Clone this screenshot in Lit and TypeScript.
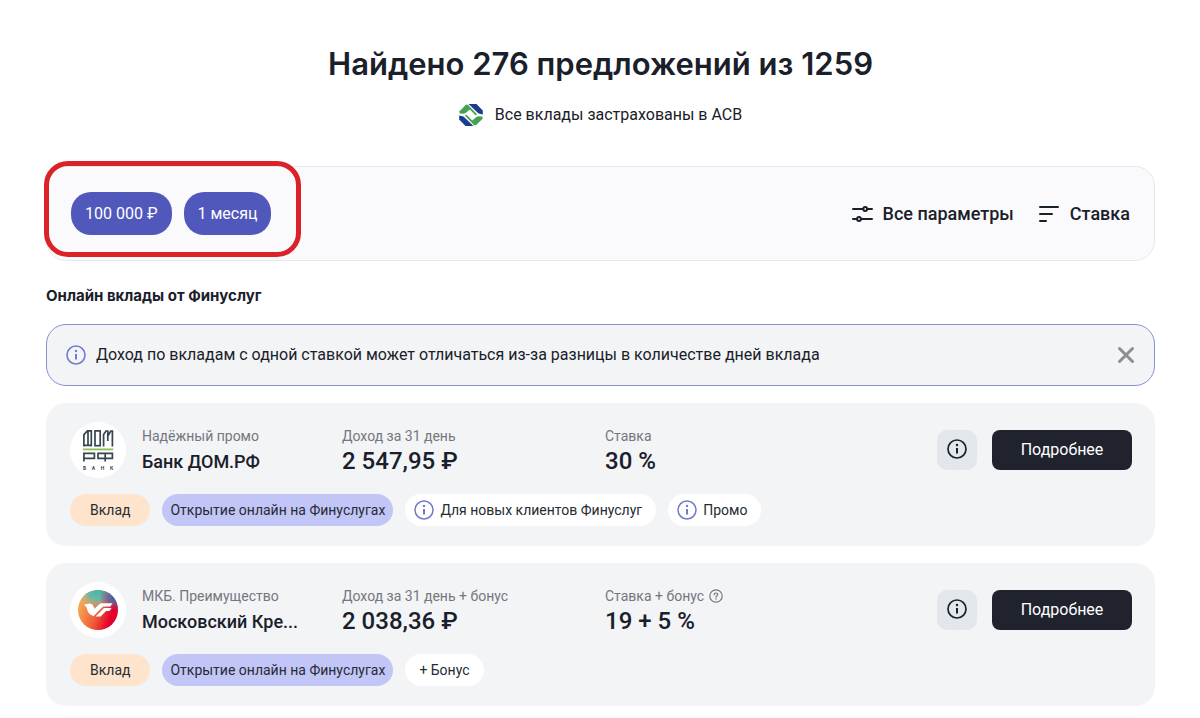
import { LitElement, html, css, nothing, type TemplateResult } from "lit";
import { customElement, property } from "lit/decorators.js";

type Tag = { text: string; kind: "type" | "online" | "plain"; info?: boolean };

type Offer = {
  logo: "domrf" | "mkb";
  product: string;
  bank: string;
  incomeLabel: string;
  income: string;
  rateLabel: string;
  rate: string;
  hint?: boolean;
  tags: Tag[];
};

const offers: Offer[] = [
  {
    logo: "domrf",
    product: "Надёжный промо",
    bank: "Банк ДОМ.РФ",
    incomeLabel: "Доход за 31 день",
    income: "2 547,95 ₽",
    rateLabel: "Ставка",
    rate: "30 %",
    tags: [
      { text: "Вклад", kind: "type" },
      { text: "Открытие онлайн на Финуслугах", kind: "online" },
      { text: "Для новых клиентов Финуслуг", kind: "plain", info: true },
      { text: "Промо", kind: "plain", info: true },
    ],
  },
  {
    logo: "mkb",
    product: "МКБ. Преимущество",
    bank: "Московский Кре...",
    incomeLabel: "Доход за 31 день + бонус",
    income: "2 038,36 ₽",
    rateLabel: "Ставка + бонус",
    rate: "19 + 5 %",
    hint: true,
    tags: [
      { text: "Вклад", kind: "type" },
      { text: "Открытие онлайн на Финуслугах", kind: "online" },
      { text: "+ Бонус", kind: "plain" },
    ],
  },
];

const infoIcon = (size: number, stroke: number) => html`
  <svg width=${size} height=${size} viewBox="0 0 20 20" fill="none" stroke="currentColor" stroke-width=${stroke} aria-hidden="true">
    <circle cx="10" cy="10" r="9"></circle>
    <path d="M10 9v5.4" stroke-width="2"></path>
    <circle cx="10" cy="6" r="1.2" fill="currentColor" stroke="none"></circle>
  </svg>
`;

const hintIcon = html`
  <svg width="14" height="14" viewBox="0 0 14 14" fill="none" stroke="currentColor" stroke-width="1.2" stroke-linecap="round" aria-hidden="true">
    <circle cx="7" cy="7" r="6.2"></circle>
    <path d="M5.2 5.7c0-1 .8-1.7 1.8-1.7s1.8.7 1.8 1.6c0 1.2-1.8 1.3-1.8 2.6"></path>
    <circle cx="7" cy="10" r=".75" fill="currentColor" stroke="none"></circle>
  </svg>
`;

const slidersIcon = html`
  <svg width="22" height="18" viewBox="0 0 22 18" fill="none" stroke="currentColor" stroke-width="2" stroke-linecap="round" aria-hidden="true">
    <path d="M2 4h10.2M16.200 4H21M2 14h4M10 14H21"></path>
    <circle cx="14.200" cy="4" r="1.900"></circle>
    <circle cx="8" cy="14" r="1.900"></circle>
  </svg>
`;

const sortIcon = html`
  <svg width="22" height="18" viewBox="0 0 22 18" fill="none" stroke="currentColor" stroke-width="2" stroke-linecap="round" aria-hidden="true">
    <path d="M2 2h18M2 9h12M2 16h6"></path>
  </svg>
`;

const closeIcon = html`
  <svg width="18" height="18" viewBox="0 0 18 18" fill="none" stroke="currentColor" stroke-width="3" stroke-linecap="round" aria-hidden="true">
    <path d="M2.500 2.500l13 13M15.500 2.500l-13 13"></path>
  </svg>
`;

const insuranceLogo = html`
  <svg width="24" height="24" viewBox="0 0 24 24" aria-hidden="true">
    <path fill="#1a3d90" d="M9.500 1H17.500L23.800 7.500V11.500L19.500 10.500z"></path>
    <path fill="#43a350" d="M.2 8.500L7 1.800H8.800L18 11.200L16.800 12.400L10.800 6.500L6.300 10.300L4.500 10.800L.8 10.500z"></path>
    <g transform="rotate(180 12 12)">
      <path fill="#1a3d90" d="M9.500 1H17.500L23.800 7.500V11.500L19.500 10.500z"></path>
      <path fill="#43a350" d="M.2 8.500L7 1.800H8.800L18 11.200L16.800 12.400L10.800 6.500L6.300 10.300L4.500 10.800L.8 10.500z"></path>
    </g>
  </svg>
`;

const domrfLogo = html`
  <svg width="56" height="56" viewBox="0 0 56 56" role="img" aria-label="ДОМ.РФ">
    <circle cx="28" cy="28" r="28" fill="#fff"></circle>
    <g fill="none" stroke="#36454f" stroke-width="1.700">
      <path d="M13.900 24.600V12.600L17.400 8.900H21.300V24.600M13.100 23.400H22.100M18 9V23.400"></path>
      <rect x="25" y="8.900" width="5.200" height="14.800"></rect>
      <path d="M33.600 24.600V12.400L36 9H37.800V19M37.800 14L40.800 9H42.400V24.600"></path>
      <path d="M13.900 39.400V31.300H24.400V36.400H13.900"></path>
      <path d="M35.200 30.400V39.400M28 31.300H42.400V36.400H28z"></path>
    </g>
    <path stroke="#8cc152" stroke-width="1.800" d="M13 27.400H43.200"></path>
    <g fill="#36454f" font-family="Roboto, sans-serif" font-size="5" font-weight="700" text-anchor="middle">
      <text x="14.500" y="47.500">Б</text><text x="23.500" y="47.500">А</text>
      <text x="32.500" y="47.500">Н</text><text x="41.500" y="47.500">К</text>
    </g>
  </svg>
`;

const mkbLogo = html`
  <svg width="56" height="56" viewBox="0 0 56 56" role="img" aria-label="МКБ">
    <defs>
      <linearGradient id="base" x1="0" y1=".35" x2="1" y2=".65">
        <stop offset="0" stop-color="#f6ad55"></stop>
        <stop offset=".5" stop-color="#ee5a35"></stop>
        <stop offset=".85" stop-color="#e4002b"></stop>
      </linearGradient>
      <radialGradient id="teal" cx=".5" cy="-.05" r=".62">
        <stop offset="0" stop-color="#35b5b0"></stop>
        <stop offset=".45" stop-color="#62bcac" stop-opacity=".95"></stop>
        <stop offset="1" stop-color="#e5c37a" stop-opacity="0"></stop>
      </radialGradient>
      <radialGradient id="blue" cx=".9" cy=".18" r=".36">
        <stop offset="0" stop-color="#3c5da8"></stop>
        <stop offset=".4" stop-color="#5a5fa0" stop-opacity=".8"></stop>
        <stop offset="1" stop-color="#c02050" stop-opacity="0"></stop>
      </radialGradient>
    </defs>
    <circle cx="28" cy="28" r="28" fill="#fff"></circle>
    <circle cx="28" cy="28" r="20" fill="url(#base)"></circle>
    <circle cx="28" cy="28" r="20" fill="url(#teal)"></circle>
    <circle cx="28" cy="28" r="20" fill="url(#blue)"></circle>
    <path fill="#fff" d="M14 22.500L20 21.500Q22.500 21.500 23.200 24L24.500 26.800L29 22.500Q30.200 21.300 32 21.300H42.500L40.300 24.500H33L23.500 34.200Q18.500 32.500 17.200 27.800L16.800 25.800z"></path>
    <path fill="#fff" d="M34 26H41.500L39.500 29H36L30.600 34.600H25.600z"></path>
  </svg>
`;

@customElement("deposit-card")
export class DepositCard extends LitElement {
  @property({ attribute: false }) offer!: Offer;

  static styles = css`
    :host {
      display: block;
    }
    .card {
      display: flex;
      flex-direction: column;
      gap: 16px;
      padding: 19px 23px 20px 24px;
      border-radius: 20px;
      background: #f2f4f6;
    }
    .summary {
      display: grid;
      grid-template-columns: 56px 184px 247px 1fr auto;
      column-gap: 16px;
      align-items: center;
    }
    svg {
      display: block;
      flex: none;
    }
    .label {
      display: flex;
      align-items: center;
      gap: 5px;
      font-size: 14px;
      line-height: 22px;
      color: #73777f;
      white-space: nowrap;
    }
    .bank,
    .value {
      margin: 0;
      font-weight: 500;
      line-height: 29px;
      color: #1a202a;
      white-space: nowrap;
    }
    .bank {
      font-size: 18px;
    }
    .value {
      font-size: 24px;
    }
    .actions {
      display: flex;
      gap: 15px;
    }
    button {
      display: flex;
      align-items: center;
      justify-content: center;
      box-sizing: border-box;
      height: 40px;
      padding: 0 0 2px;
      border: 0;
      font-family: inherit;
      cursor: pointer;
    }
    .info {
      width: 40px;
      border-radius: 10px;
      background: #e3e6eb;
      color: #1a202a;
    }
    .more {
      width: 140px;
      border-radius: 8px;
      background: #20232e;
      color: #fff;
      font-size: 16px;
    }
    .tags {
      display: flex;
      flex-wrap: wrap;
      gap: 12px;
      margin: 0;
      padding: 0;
      list-style: none;
    }
    .tag {
      display: flex;
      align-items: center;
      gap: 6px;
      height: 32px;
      padding: 0 14px;
      border-radius: 16px;
      background: #fff;
      font-size: 14px;
      color: #262b34;
    }
    .type {
      padding: 0 20px;
      background: #fee4cd;
    }
    .online {
      padding: 0 8px;
      background: #c2c6f7;
    }
    .with-info {
      padding-left: 9px;
    }
    .with-info svg {
      color: #6f7bc9;
    }
  `;

  render() {
    const o = this.offer;
    return html`
      <article class="card">
        <div class="summary">
          ${o.logo === "domrf" ? domrfLogo : mkbLogo}
          <div>
            <div class="label">${o.product}</div>
            <h3 class="bank">${o.bank}</h3>
          </div>
          <div>
            <div class="label">${o.incomeLabel}</div>
            <p class="value">${o.income}</p>
          </div>
          <div>
            <div class="label">${o.rateLabel}${o.hint ? hintIcon : nothing}</div>
            <p class="value">${o.rate}</p>
          </div>
          <div class="actions">
            <button class="info" type="button" aria-label="Информация">${infoIcon(20, 1.7)}</button>
            <button class="more" type="button">Подробнее</button>
          </div>
        </div>
        <ul class="tags">
          ${o.tags.map(
            (t) => html`<li class="tag ${t.kind} ${t.info ? "with-info" : ""}">
              ${t.info ? infoIcon(20, 1.5) : nothing}<span>${t.text}</span>
            </li>`
          )}
        </ul>
      </article>
    `;
  }
}

@customElement("app-root")
export class AppRoot extends LitElement {
  static styles = css`
    :host {
      display: block;
      font-family: Roboto, "Liberation Sans", sans-serif;
      color: #1a202a;
      background: #fff;
    }
    .page {
      padding: 44px 45px 12px 46px;
    }
    svg {
      display: block;
      flex: none;
    }
    h1,
    h2,
    p {
      margin: 0;
    }
    .title {
      font-family: Inter, sans-serif;
      font-size: 31px;
      font-weight: 600;
      line-height: 40px;
      text-align: center;
    }
    .insured {
      display: flex;
      align-items: center;
      justify-content: center;
      gap: 12px;
      margin-top: 18px;
      font-size: 16px;
      line-height: 25px;
    }
    .filters {
      position: relative;
      display: flex;
      align-items: center;
      justify-content: space-between;
      margin-top: 39px;
      padding: 25px 24px;
      border: 1px solid #e7e8ec;
      border-radius: 20px;
      background: #fafafc;
    }
    .highlight {
      position: absolute;
      top: -6px;
      left: -3px;
      width: 247px;
      height: 86px;
      border: 5px solid #da2229;
      border-radius: 24px;
      pointer-events: none;
    }
    .chips,
    .tools {
      display: flex;
      align-items: center;
    }
    .chips {
      gap: 12px;
    }
    .tools {
      gap: 24px;
    }
    button {
      display: flex;
      align-items: center;
      padding: 0;
      border: 0;
      background: none;
      color: inherit;
      font-family: inherit;
      cursor: pointer;
    }
    .chip {
      height: 43px;
      padding: 0 14px;
      border-radius: 20px;
      background: #5158bb;
      color: #fff;
      font-size: 16px;
    }
    .tool {
      gap: 10px;
      font-size: 18px;
      font-weight: 500;
    }
    .subtitle {
      margin-top: 25px;
      font-family: Inter, sans-serif;
      font-size: 15px;
      font-weight: 700;
      line-height: 20px;
    }
    .notice {
      display: flex;
      align-items: center;
      gap: 10px;
      margin-top: 18px;
      padding: 18px 19px;
      border: 1px solid #8891cf;
      border-radius: 20px;
      background: #f2f4f6;
      font-size: 16px;
      line-height: 24px;
    }
    .notice svg {
      color: #6f7bd0;
    }
    .notice p {
      flex: 1;
    }
    .notice .close svg {
      color: #8b8e93;
    }
    .offers {
      display: grid;
      gap: 17px;
      margin-top: 17px;
    }
  `;

  render(): TemplateResult {
    return html`
      <main class="page">
        <h1 class="title">Найдено 276 предложений из 1259</h1>
        <p class="insured">${insuranceLogo}<span>Все вклады застрахованы в АСВ</span></p>
        <section class="filters">
          <div class="chips">
            <button class="chip" type="button">100 000 ₽</button>
            <button class="chip" type="button">1 месяц</button>
          </div>
          <div class="tools">
            <button class="tool" type="button">${slidersIcon}Все параметры</button>
            <button class="tool" type="button">${sortIcon}Ставка</button>
          </div>
          <div class="highlight"></div>
        </section>
        <h2 class="subtitle">Онлайн вклады от Финуслуг</h2>
        <div class="notice">
          ${infoIcon(20, 1.6)}
          <p>Доход по вкладам с одной ставкой может отличаться из-за разницы в количестве дней вклада</p>
          <button class="close" type="button" aria-label="Закрыть">${closeIcon}</button>
        </div>
        <section class="offers">
          ${offers.map((o) => html`<deposit-card .offer=${o}></deposit-card>`)}
        </section>
      </main>
    `;
  }
}
